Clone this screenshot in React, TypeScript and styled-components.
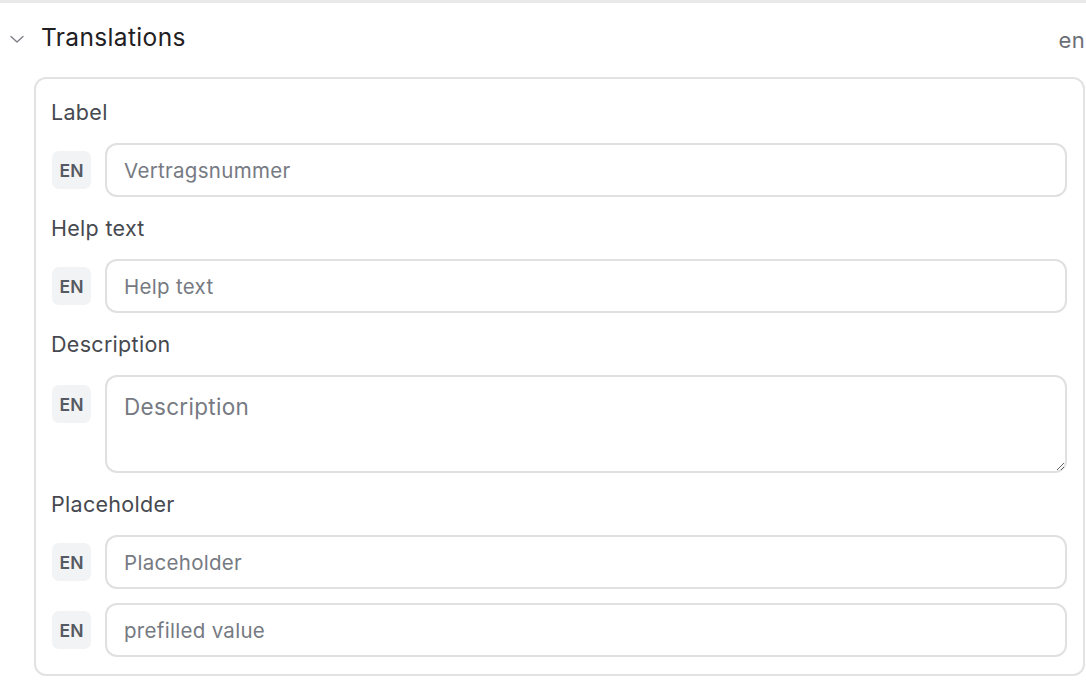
import React from "react";
import styled, { createGlobalStyle } from "styled-components";

const GlobalStyle = createGlobalStyle`
  html, body {
    margin: 0;
    padding: 0;
    background: #ffffff;
    font-family: Inter, "Noto Sans", sans-serif;
  }
`;

const Section = styled.section`
  border-top: 3px solid #e9e9e9;
  width: 1086px;
  box-sizing: border-box;
  padding: 0 1px 0 0;
`;

const Header = styled.div`
  display: flex;
  align-items: center;
  height: 74px;
  padding-left: 9px;
`;

const Chevron = styled.svg`
  width: 16px;
  height: 16px;
  margin-right: 16px;
  margin-top: -2px;
  flex-shrink: 0;
`;

const Title = styled.h3`
  margin: 0;
  margin-top: -6px;
  font-size: 24.5px;
  font-weight: 420;
  color: #1f2023;
  flex: 1;
  letter-spacing: 0.35px;
`;

const Locale = styled.span`
  font-size: 22px;
  color: #6b6f76;
  margin-top: 0;
  letter-spacing: 0.3px;
`;

const Card = styled.div`
  margin-left: 34px;
  border: 2px solid #e2e2e2;
  border-radius: 12px;
  padding: 18px 16px 17px 15px;
  display: flex;
  flex-direction: column;
`;

const Group = styled.div`
  display: flex;
  flex-direction: column;
  gap: 14px;
  & + & {
    margin-top: 16px;
  }
`;

const FieldLabel = styled.label`
  font-size: 21.5px;
  line-height: 30px;
  color: #46494f;
  margin-bottom: 2px;
  letter-spacing: 0.3px;
`;

const Row = styled.div<{ $top?: boolean }>`
  display: flex;
  align-items: ${({ $top }) => ($top ? "flex-start" : "center")};
  gap: 14px;
`;

const Badge = styled.span<{ $offset?: number }>`
  display: flex;
  align-items: center;
  justify-content: center;
  width: 39px;
  height: 38px;
  margin-left: 1px;
  margin-top: ${({ $offset }) => ($offset ? $offset + "px" : 0)};
  border-radius: 7px;
  background: #f2f3f5;
  color: #555a62;
  font-size: 17.5px;
  font-weight: 600;
  flex-shrink: 0;
`;

const TextInput = styled.input`
  flex: 1;
  height: 54px;
  box-sizing: border-box;
  border: 2px solid #e0e0e0;
  border-radius: 12px;
  padding: 0 17px;
  font-family: Inter, "Noto Sans", sans-serif;
  font-size: 20.5px;
  letter-spacing: 0.3px;
  color: #333;
  background: #fff;
  outline: none;
  &::placeholder {
    color: #767a82;
  }
`;

const TextArea = styled.textarea`
  flex: 1;
  height: 98px;
  box-sizing: border-box;
  border: 2px solid #e0e0e0;
  border-radius: 12px;
  padding: 16px 17px;
  font-family: Inter, "Noto Sans", sans-serif;
  font-size: 22.5px;
  letter-spacing: 0.3px;
  color: #333;
  background: #fff;
  outline: none;
  resize: vertical;
  &::placeholder {
    color: #767a82;
  }
`;

export default function App() {
  return (
    <>
      <GlobalStyle />
      <Section>
        <Header>
          <Chevron viewBox="0 0 16 16" fill="none" stroke="#7a7d83" strokeWidth="1.3" strokeLinecap="round" strokeLinejoin="round">
            <path d="M2 5.5l6 5.5 6-5.5" />
          </Chevron>
          <Title>Translations</Title>
          <Locale>en</Locale>
        </Header>
        <Card>
          <Group>
            <FieldLabel>Label</FieldLabel>
            <Row>
              <Badge>EN</Badge>
              <TextInput placeholder="Vertragsnummer" />
            </Row>
          </Group>
          <Group>
            <FieldLabel>Help text</FieldLabel>
            <Row>
              <Badge>EN</Badge>
              <TextInput placeholder="Help text" />
            </Row>
          </Group>
          <Group>
            <FieldLabel>Description</FieldLabel>
            <Row $top>
              <Badge $offset={10}>EN</Badge>
              <TextArea placeholder="Description" />
            </Row>
          </Group>
          <Group>
            <FieldLabel>Placeholder</FieldLabel>
            <Row>
              <Badge>EN</Badge>
              <TextInput placeholder="Placeholder" />
            </Row>
            <Row>
              <Badge>EN</Badge>
              <TextInput placeholder="prefilled value" />
            </Row>
          </Group>
        </Card>
      </Section>
    </>
  );
}
